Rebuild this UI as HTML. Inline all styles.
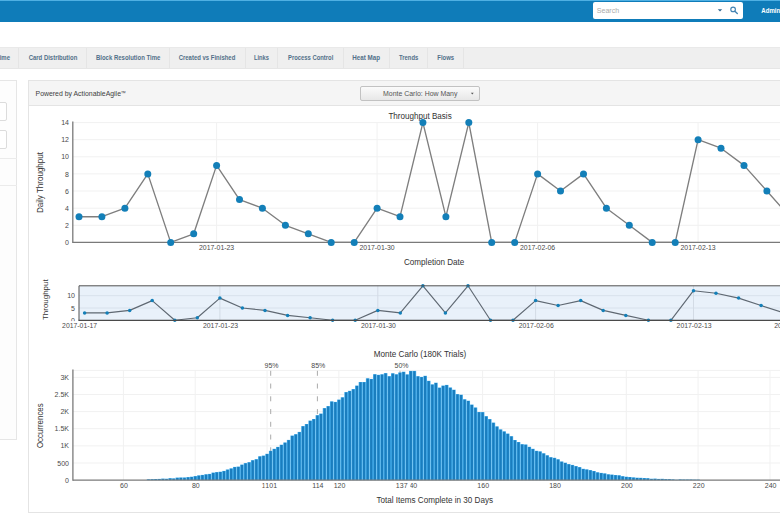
<!DOCTYPE html>
<html><head><meta charset="utf-8"><title>Monte Carlo: How Many</title>
<style>
html,body{margin:0;padding:0;}
body{width:780px;height:516px;overflow:hidden;background:#fff;font-family:"Liberation Sans",Arial,sans-serif;position:relative;}
.abs{position:absolute;}
#topbar{left:0;top:0;width:780px;height:22px;background:#0f7cb9;border-top:1px solid #4fb0e3;box-sizing:border-box;}
#search{left:593.3px;top:2px;width:149.8px;height:16.5px;background:#fff;border-radius:2px;}
#tabs{left:0;top:47px;width:780px;height:21.5px;background:#efefef;border-top:1px solid #e9e9e9;border-bottom:1px solid #e6e6e6;box-sizing:border-box;}
.tab{position:absolute;top:0;height:19.5px;border-right:1px solid #e5e5e5;box-sizing:border-box;}
#lpanel{left:-5px;top:79.8px;width:22.2px;height:359.9px;border:1px solid #e6e6e6;background:#fdfdfd;box-sizing:border-box;}
.inp{position:absolute;left:-5px;width:12px;height:19.2px;border:1px solid #dcdcdc;border-radius:2px;background:#fff;box-sizing:border-box;}
#panel{left:28.2px;top:79.8px;width:760px;height:432.9px;border:1px solid #e4e4e4;background:#fff;box-sizing:border-box;}
#phead{left:0;top:0;width:760px;height:25px;background:#f5f5f5;border-bottom:1px solid #e4e4e4;box-sizing:border-box;}
#dd{left:331px;top:5.3px;width:120px;height:14.6px;border:1px solid #c2c2c2;border-radius:2px;box-sizing:border-box;background:linear-gradient(#fbfbfb,#e7e7e7);}
svg text{font-family:"Liberation Sans",Arial,sans-serif;}
</style></head><body>
<div class="abs" id="topbar"></div>
<div class="abs" id="search"></div>
<div class="abs" id="tabs">
<div class="tab" style="left:-40px;width:59.4px"></div>
<div class="tab" style="left:19.4px;width:67.2px"></div>
<div class="tab" style="left:86.6px;width:83.2px"></div>
<div class="tab" style="left:169.8px;width:76.5px"></div>
<div class="tab" style="left:246.3px;width:31.7px"></div>
<div class="tab" style="left:278px;width:65.8px"></div>
<div class="tab" style="left:343.8px;width:46.0px"></div>
<div class="tab" style="left:389.8px;width:38.2px"></div>
<div class="tab" style="left:428px;width:35.8px"></div>
</div>
<div class="abs" id="lpanel"></div>
<div class="inp" style="top:102px"></div>
<div class="inp" style="top:130.2px"></div>
<div class="abs" style="left:0;top:158.4px;width:16.5px;height:1px;background:#ebebeb"></div>
<div class="abs" style="left:0;top:185px;width:16.5px;height:1px;background:#ebebeb"></div>
<div class="abs" id="panel">
<div class="abs" id="phead"></div>
<div class="abs" id="dd"></div>
</div>

<svg class="abs" style="left:0;top:0" width="780" height="516" viewBox="0 0 780 516">
<text x="596.8" y="13.3" font-size="7" textLength="22.4" lengthAdjust="spacingAndGlyphs" fill="#ababab">Search</text>
<path d="M717.8 9.3 L722.2 9.3 L720 11.5 Z" fill="#2d6590"/>
<circle cx="733.1" cy="9.4" r="2.3" fill="none" stroke="#4384b3" stroke-width="1.15"/><path d="M734.9 11.2 L737.3 13.5" stroke="#4384b3" stroke-width="1.4" stroke-linecap="round"/>
<text x="761.3" y="13.0" font-size="6.8" textLength="39.9" lengthAdjust="spacingAndGlyphs" fill="#fff" font-weight="bold">Administrator</text>
<text x="-21.5" y="60.4" font-size="6.3" textLength="31.5" lengthAdjust="spacingAndGlyphs" fill="#526f89" font-weight="bold">Cycle Time</text>
<text x="28.7" y="60.4" font-size="6.3" textLength="48.6" lengthAdjust="spacingAndGlyphs" fill="#526f89" font-weight="bold">Card Distribution</text>
<text x="96.0" y="60.4" font-size="6.3" textLength="64.3" lengthAdjust="spacingAndGlyphs" fill="#526f89" font-weight="bold">Block Resolution Time</text>
<text x="178.7" y="60.4" font-size="6.3" textLength="56.6" lengthAdjust="spacingAndGlyphs" fill="#526f89" font-weight="bold">Created vs Finished</text>
<text x="254.0" y="60.4" font-size="6.3" textLength="15.0" lengthAdjust="spacingAndGlyphs" fill="#526f89" font-weight="bold">Links</text>
<text x="288.0" y="60.4" font-size="6.3" textLength="45.3" lengthAdjust="spacingAndGlyphs" fill="#526f89" font-weight="bold">Process Control</text>
<text x="352.3" y="60.4" font-size="6.3" textLength="27.7" lengthAdjust="spacingAndGlyphs" fill="#526f89" font-weight="bold">Heat Map</text>
<text x="399.0" y="60.4" font-size="6.3" textLength="19.3" lengthAdjust="spacingAndGlyphs" fill="#526f89" font-weight="bold">Trends</text>
<text x="437.3" y="60.4" font-size="6.3" textLength="16.7" lengthAdjust="spacingAndGlyphs" fill="#526f89" font-weight="bold">Flows</text>
<text x="35.6" y="96.0" font-size="7.7" textLength="90.4" lengthAdjust="spacingAndGlyphs" fill="#404040">Powered by ActionableAgile<tspan font-size="5.6" dy="-1.4">&#8482;</tspan></text>
<text x="383.0" y="95.8" font-size="7.6" textLength="74.4" lengthAdjust="spacingAndGlyphs" fill="#555">Monte Carlo: How Many</text>
<path d="M470.9 92.8 L473.7 92.8 L472.3 94.6 Z" fill="#555"/>
<line x1="72.8" x2="780" y1="225.3" y2="225.3" stroke="#f1f1f1" stroke-width="1"/>
<line x1="72.8" x2="780" y1="208.2" y2="208.2" stroke="#f1f1f1" stroke-width="1"/>
<line x1="72.8" x2="780" y1="191.0" y2="191.0" stroke="#f1f1f1" stroke-width="1"/>
<line x1="72.8" x2="780" y1="173.9" y2="173.9" stroke="#f1f1f1" stroke-width="1"/>
<line x1="72.8" x2="780" y1="156.8" y2="156.8" stroke="#f1f1f1" stroke-width="1"/>
<line x1="72.8" x2="780" y1="139.7" y2="139.7" stroke="#f1f1f1" stroke-width="1"/>
<line x1="72.8" x2="780" y1="122.6" y2="122.6" stroke="#f1f1f1" stroke-width="1"/>
<line x1="216.6" x2="216.6" y1="122.6" y2="242.4" stroke="#f1f1f1" stroke-width="1"/>
<line x1="377.1" x2="377.1" y1="122.6" y2="242.4" stroke="#f1f1f1" stroke-width="1"/>
<line x1="537.6" x2="537.6" y1="122.6" y2="242.4" stroke="#f1f1f1" stroke-width="1"/>
<line x1="698.1" x2="698.1" y1="122.6" y2="242.4" stroke="#f1f1f1" stroke-width="1"/>
<line x1="72.8" x2="72.8" y1="121.6" y2="243.0" stroke="#7a7a7a" stroke-width="1.3"/>
<line x1="72.8" x2="780" y1="242.4" y2="242.4" stroke="#7a7a7a" stroke-width="1.3"/>
<text x="69" y="245.0" font-size="7" text-anchor="end" fill="#4a4a4a">0</text>
<text x="69" y="227.9" font-size="7" text-anchor="end" fill="#4a4a4a">2</text>
<text x="69" y="210.8" font-size="7" text-anchor="end" fill="#4a4a4a">4</text>
<text x="69" y="193.6" font-size="7" text-anchor="end" fill="#4a4a4a">6</text>
<text x="69" y="176.5" font-size="7" text-anchor="end" fill="#4a4a4a">8</text>
<text x="69" y="159.4" font-size="7" text-anchor="end" fill="#4a4a4a">10</text>
<text x="69" y="142.3" font-size="7" text-anchor="end" fill="#4a4a4a">12</text>
<text x="69" y="125.2" font-size="7" text-anchor="end" fill="#4a4a4a">14</text>
<polyline points="79.0,216.7 101.9,216.7 124.9,208.2 147.8,173.9 170.7,242.4 193.7,233.8 216.6,165.4 239.5,199.6 262.4,208.2 285.4,225.3 308.3,233.8 331.2,242.4 354.2,242.4 377.1,208.2 400.0,216.7 422.9,122.6 445.9,216.7 468.8,122.6 491.7,242.4 514.7,242.4 537.6,173.9 560.5,191.0 583.5,173.9 606.4,208.2 629.3,225.3 652.2,242.4 675.2,242.4 698.1,139.7 721.0,148.2 744.0,165.4 766.9,191.0 789.8,216.7" fill="none" stroke="#7e7e7e" stroke-width="1.35" stroke-linejoin="round"/>
<circle cx="79.0" cy="216.7" r="3.5" fill="#137fb8"/>
<circle cx="101.9" cy="216.7" r="3.5" fill="#137fb8"/>
<circle cx="124.9" cy="208.2" r="3.5" fill="#137fb8"/>
<circle cx="147.8" cy="173.9" r="3.5" fill="#137fb8"/>
<circle cx="170.7" cy="242.4" r="3.5" fill="#137fb8"/>
<circle cx="193.7" cy="233.8" r="3.5" fill="#137fb8"/>
<circle cx="216.6" cy="165.4" r="3.5" fill="#137fb8"/>
<circle cx="239.5" cy="199.6" r="3.5" fill="#137fb8"/>
<circle cx="262.4" cy="208.2" r="3.5" fill="#137fb8"/>
<circle cx="285.4" cy="225.3" r="3.5" fill="#137fb8"/>
<circle cx="308.3" cy="233.8" r="3.5" fill="#137fb8"/>
<circle cx="331.2" cy="242.4" r="3.5" fill="#137fb8"/>
<circle cx="354.2" cy="242.4" r="3.5" fill="#137fb8"/>
<circle cx="377.1" cy="208.2" r="3.5" fill="#137fb8"/>
<circle cx="400.0" cy="216.7" r="3.5" fill="#137fb8"/>
<circle cx="422.9" cy="122.6" r="3.5" fill="#137fb8"/>
<circle cx="445.9" cy="216.7" r="3.5" fill="#137fb8"/>
<circle cx="468.8" cy="122.6" r="3.5" fill="#137fb8"/>
<circle cx="491.7" cy="242.4" r="3.5" fill="#137fb8"/>
<circle cx="514.7" cy="242.4" r="3.5" fill="#137fb8"/>
<circle cx="537.6" cy="173.9" r="3.5" fill="#137fb8"/>
<circle cx="560.5" cy="191.0" r="3.5" fill="#137fb8"/>
<circle cx="583.5" cy="173.9" r="3.5" fill="#137fb8"/>
<circle cx="606.4" cy="208.2" r="3.5" fill="#137fb8"/>
<circle cx="629.3" cy="225.3" r="3.5" fill="#137fb8"/>
<circle cx="652.2" cy="242.4" r="3.5" fill="#137fb8"/>
<circle cx="675.2" cy="242.4" r="3.5" fill="#137fb8"/>
<circle cx="698.1" cy="139.7" r="3.5" fill="#137fb8"/>
<circle cx="721.0" cy="148.2" r="3.5" fill="#137fb8"/>
<circle cx="744.0" cy="165.4" r="3.5" fill="#137fb8"/>
<circle cx="766.9" cy="191.0" r="3.5" fill="#137fb8"/>
<circle cx="789.8" cy="216.7" r="3.5" fill="#137fb8"/>
<text x="199.0" y="250.4" font-size="7" textLength="35.2" lengthAdjust="spacingAndGlyphs" fill="#4a4a4a">2017-01-23</text>
<text x="359.5" y="250.4" font-size="7" textLength="35.2" lengthAdjust="spacingAndGlyphs" fill="#4a4a4a">2017-01-30</text>
<text x="520.0" y="250.4" font-size="7" textLength="35.2" lengthAdjust="spacingAndGlyphs" fill="#4a4a4a">2017-02-06</text>
<text x="680.5" y="250.4" font-size="7" textLength="35.2" lengthAdjust="spacingAndGlyphs" fill="#4a4a4a">2017-02-13</text>
<text x="388.4" y="119.3" font-size="8.4" textLength="63.3" lengthAdjust="spacingAndGlyphs" fill="#333">Throughput Basis</text>
<text x="404.0" y="264.7" font-size="8.4" textLength="60.3" lengthAdjust="spacingAndGlyphs" fill="#333">Completion Date</text>
<g transform="translate(40,182.5) rotate(-90)"><text x="-30.5" y="3.0" font-size="8.4" textLength="61.0" lengthAdjust="spacingAndGlyphs" fill="#333">Daily Throughput</text></g>
<rect x="79" y="285.8" width="706" height="34.5" fill="#e9f1fa"/>
<line x1="79" x2="780" y1="308.0" y2="308.0" stroke="#d8e1ec" stroke-width="1"/>
<line x1="79" x2="780" y1="295.7" y2="295.7" stroke="#d8e1ec" stroke-width="1"/>
<line x1="219.9" x2="219.9" y1="285.8" y2="320.3" stroke="#d3dbe5" stroke-width="1"/>
<line x1="377.8" x2="377.8" y1="285.8" y2="320.3" stroke="#d3dbe5" stroke-width="1"/>
<line x1="535.6" x2="535.6" y1="285.8" y2="320.3" stroke="#d3dbe5" stroke-width="1"/>
<line x1="693.5" x2="693.5" y1="285.8" y2="320.3" stroke="#d3dbe5" stroke-width="1"/>
<polyline points="84.6,312.9 107.1,312.9 129.7,310.4 152.2,300.6 174.8,320.3 197.3,317.8 219.9,298.1 242.4,308.0 265.0,310.4 287.6,315.4 310.1,317.8 332.6,320.3 355.2,320.3 377.8,310.4 400.3,312.9 422.9,285.8 445.4,312.9 468.0,285.8 490.5,320.3 513.0,320.3 535.6,300.6 558.1,305.5 580.7,300.6 603.2,310.4 625.8,315.4 648.4,320.3 670.9,320.3 693.5,290.7 716.0,293.2 738.6,298.1 761.1,305.5 783.7,312.9 806.2,315.4" fill="none" stroke="#5f6872" stroke-width="1.15" stroke-linejoin="round"/>
<circle cx="84.6" cy="312.9" r="1.75" fill="#137fb8"/>
<circle cx="107.1" cy="312.9" r="1.75" fill="#137fb8"/>
<circle cx="129.7" cy="310.4" r="1.75" fill="#137fb8"/>
<circle cx="152.2" cy="300.6" r="1.75" fill="#137fb8"/>
<circle cx="174.8" cy="320.3" r="1.75" fill="#137fb8"/>
<circle cx="197.3" cy="317.8" r="1.75" fill="#137fb8"/>
<circle cx="219.9" cy="298.1" r="1.75" fill="#137fb8"/>
<circle cx="242.4" cy="308.0" r="1.75" fill="#137fb8"/>
<circle cx="265.0" cy="310.4" r="1.75" fill="#137fb8"/>
<circle cx="287.6" cy="315.4" r="1.75" fill="#137fb8"/>
<circle cx="310.1" cy="317.8" r="1.75" fill="#137fb8"/>
<circle cx="332.6" cy="320.3" r="1.75" fill="#137fb8"/>
<circle cx="355.2" cy="320.3" r="1.75" fill="#137fb8"/>
<circle cx="377.8" cy="310.4" r="1.75" fill="#137fb8"/>
<circle cx="400.3" cy="312.9" r="1.75" fill="#137fb8"/>
<circle cx="422.9" cy="285.8" r="1.75" fill="#137fb8"/>
<circle cx="445.4" cy="312.9" r="1.75" fill="#137fb8"/>
<circle cx="468.0" cy="285.8" r="1.75" fill="#137fb8"/>
<circle cx="490.5" cy="320.3" r="1.75" fill="#137fb8"/>
<circle cx="513.0" cy="320.3" r="1.75" fill="#137fb8"/>
<circle cx="535.6" cy="300.6" r="1.75" fill="#137fb8"/>
<circle cx="558.1" cy="305.5" r="1.75" fill="#137fb8"/>
<circle cx="580.7" cy="300.6" r="1.75" fill="#137fb8"/>
<circle cx="603.2" cy="310.4" r="1.75" fill="#137fb8"/>
<circle cx="625.8" cy="315.4" r="1.75" fill="#137fb8"/>
<circle cx="648.4" cy="320.3" r="1.75" fill="#137fb8"/>
<circle cx="670.9" cy="320.3" r="1.75" fill="#137fb8"/>
<circle cx="693.5" cy="290.7" r="1.75" fill="#137fb8"/>
<circle cx="716.0" cy="293.2" r="1.75" fill="#137fb8"/>
<circle cx="738.6" cy="298.1" r="1.75" fill="#137fb8"/>
<circle cx="761.1" cy="305.5" r="1.75" fill="#137fb8"/>
<circle cx="783.7" cy="312.9" r="1.75" fill="#137fb8"/>
<path d="M79 320.3 L79 285.8 L785 285.8" fill="none" stroke="#505050" stroke-width="1"/>
<line x1="78.4" x2="780" y1="320.3" y2="320.3" stroke="#4a4a4a" stroke-width="1.3"/>
<text x="75" y="322.9" font-size="7" text-anchor="end" fill="#4a4a4a">0</text>
<text x="75" y="310.6" font-size="7" text-anchor="end" fill="#4a4a4a">5</text>
<text x="75" y="298.3" font-size="7" text-anchor="end" fill="#4a4a4a">10</text>
<rect x="60" y="321.1" width="18" height="3" fill="#fff"/>
<text x="62.1" y="328.3" font-size="7" textLength="35.0" lengthAdjust="spacingAndGlyphs" fill="#4a4a4a">2017-01-17</text>
<text x="203.0" y="328.3" font-size="7" textLength="35.0" lengthAdjust="spacingAndGlyphs" fill="#4a4a4a">2017-01-23</text>
<text x="360.9" y="328.3" font-size="7" textLength="35.0" lengthAdjust="spacingAndGlyphs" fill="#4a4a4a">2017-01-30</text>
<text x="518.7" y="328.3" font-size="7" textLength="35.0" lengthAdjust="spacingAndGlyphs" fill="#4a4a4a">2017-02-06</text>
<text x="676.6" y="328.3" font-size="7" textLength="35.0" lengthAdjust="spacingAndGlyphs" fill="#4a4a4a">2017-02-13</text>
<text x="774.2" y="328.3" font-size="7" textLength="35.0" lengthAdjust="spacingAndGlyphs" fill="#4a4a4a">2017-02-17</text>
<g transform="translate(45.6,299.7) rotate(-90)"><text x="-20.3" y="2.8" font-size="7.8" textLength="40.6" lengthAdjust="spacingAndGlyphs" fill="#333">Throughput</text></g>
<line x1="72.9" x2="780" y1="370.4" y2="370.4" stroke="#f1f1f1" stroke-width="1"/>
<line x1="72.9" x2="780" y1="463.0" y2="463.0" stroke="#f1f1f1" stroke-width="1"/>
<line x1="72.9" x2="780" y1="445.9" y2="445.9" stroke="#f1f1f1" stroke-width="1"/>
<line x1="72.9" x2="780" y1="428.7" y2="428.7" stroke="#f1f1f1" stroke-width="1"/>
<line x1="72.9" x2="780" y1="411.6" y2="411.6" stroke="#f1f1f1" stroke-width="1"/>
<line x1="72.9" x2="780" y1="394.5" y2="394.5" stroke="#f1f1f1" stroke-width="1"/>
<line x1="72.9" x2="780" y1="377.4" y2="377.4" stroke="#f1f1f1" stroke-width="1"/>
<line x1="123.4" x2="123.4" y1="370.4" y2="480.1" stroke="#f1f1f1" stroke-width="1"/>
<line x1="195.2" x2="195.2" y1="370.4" y2="480.1" stroke="#f1f1f1" stroke-width="1"/>
<line x1="267.1" x2="267.1" y1="370.4" y2="480.1" stroke="#f1f1f1" stroke-width="1"/>
<line x1="338.9" x2="338.9" y1="370.4" y2="480.1" stroke="#f1f1f1" stroke-width="1"/>
<line x1="410.8" x2="410.8" y1="370.4" y2="480.1" stroke="#f1f1f1" stroke-width="1"/>
<line x1="482.6" x2="482.6" y1="370.4" y2="480.1" stroke="#f1f1f1" stroke-width="1"/>
<line x1="554.4" x2="554.4" y1="370.4" y2="480.1" stroke="#f1f1f1" stroke-width="1"/>
<line x1="626.3" x2="626.3" y1="370.4" y2="480.1" stroke="#f1f1f1" stroke-width="1"/>
<line x1="698.1" x2="698.1" y1="370.4" y2="480.1" stroke="#f1f1f1" stroke-width="1"/>
<line x1="770.0" x2="770.0" y1="370.4" y2="480.1" stroke="#f1f1f1" stroke-width="1"/>
<line x1="270.7" x2="270.7" y1="370.8" y2="480.1" stroke="#ababab" stroke-width="1" stroke-dasharray="5 7.75"/>
<line x1="317.4" x2="317.4" y1="370.8" y2="480.1" stroke="#ababab" stroke-width="1" stroke-dasharray="5 7.75"/>
<line x1="400.0" x2="400.0" y1="370.8" y2="480.1" stroke="#ababab" stroke-width="1" stroke-dasharray="5 7.75"/>
<rect x="146.75" y="479.3" width="3.6" height="0.8" fill="#46b0ee"/>
<rect x="150.35" y="479.2" width="3.6" height="0.9" fill="#46b0ee"/>
<rect x="153.94" y="479.0" width="3.6" height="1.1" fill="#46b0ee"/>
<rect x="157.53" y="478.9" width="3.6" height="1.2" fill="#46b0ee"/>
<rect x="161.12" y="478.6" width="3.6" height="1.5" fill="#46b0ee"/>
<rect x="164.71" y="478.7" width="3.6" height="1.4" fill="#46b0ee"/>
<rect x="168.31" y="478.2" width="3.6" height="1.9" fill="#46b0ee"/>
<rect x="171.90" y="478.4" width="3.6" height="1.7" fill="#46b0ee"/>
<rect x="175.49" y="477.6" width="3.6" height="2.5" fill="#46b0ee"/>
<rect x="179.08" y="477.5" width="3.6" height="2.6" fill="#46b0ee"/>
<rect x="182.67" y="477.5" width="3.6" height="2.6" fill="#46b0ee"/>
<rect x="186.27" y="477.1" width="3.6" height="3.0" fill="#46b0ee"/>
<rect x="189.86" y="476.7" width="3.6" height="3.4" fill="#46b0ee"/>
<rect x="193.45" y="476.1" width="3.6" height="4.0" fill="#46b0ee"/>
<rect x="197.04" y="475.4" width="3.6" height="4.7" fill="#46b0ee"/>
<rect x="200.63" y="474.9" width="3.6" height="5.2" fill="#46b0ee"/>
<rect x="204.23" y="474.3" width="3.6" height="5.8" fill="#46b0ee"/>
<rect x="207.82" y="473.9" width="3.6" height="6.2" fill="#46b0ee"/>
<rect x="211.41" y="472.6" width="3.6" height="7.5" fill="#46b0ee"/>
<rect x="215.00" y="472.1" width="3.6" height="8.0" fill="#46b0ee"/>
<rect x="218.59" y="471.7" width="3.6" height="8.4" fill="#46b0ee"/>
<rect x="222.19" y="470.9" width="3.6" height="9.2" fill="#46b0ee"/>
<rect x="225.78" y="469.5" width="3.6" height="10.6" fill="#46b0ee"/>
<rect x="229.37" y="468.4" width="3.6" height="11.7" fill="#46b0ee"/>
<rect x="232.96" y="466.9" width="3.6" height="13.2" fill="#46b0ee"/>
<rect x="236.55" y="466.6" width="3.6" height="13.5" fill="#46b0ee"/>
<rect x="240.15" y="464.6" width="3.6" height="15.5" fill="#46b0ee"/>
<rect x="243.74" y="463.1" width="3.6" height="17.0" fill="#46b0ee"/>
<rect x="247.33" y="462.2" width="3.6" height="17.9" fill="#46b0ee"/>
<rect x="250.92" y="460.2" width="3.6" height="19.9" fill="#46b0ee"/>
<rect x="254.51" y="459.2" width="3.6" height="20.9" fill="#46b0ee"/>
<rect x="258.11" y="456.3" width="3.6" height="23.8" fill="#46b0ee"/>
<rect x="261.70" y="455.6" width="3.6" height="24.5" fill="#46b0ee"/>
<rect x="265.29" y="453.8" width="3.6" height="26.3" fill="#46b0ee"/>
<rect x="268.88" y="450.8" width="3.6" height="29.3" fill="#46b0ee"/>
<rect x="272.47" y="448.8" width="3.6" height="31.3" fill="#46b0ee"/>
<rect x="276.07" y="446.9" width="3.6" height="33.2" fill="#46b0ee"/>
<rect x="279.66" y="444.7" width="3.6" height="35.4" fill="#46b0ee"/>
<rect x="283.25" y="442.5" width="3.6" height="37.6" fill="#46b0ee"/>
<rect x="286.84" y="439.9" width="3.6" height="40.2" fill="#46b0ee"/>
<rect x="290.43" y="435.6" width="3.6" height="44.5" fill="#46b0ee"/>
<rect x="294.03" y="434.2" width="3.6" height="45.9" fill="#46b0ee"/>
<rect x="297.62" y="431.9" width="3.6" height="48.2" fill="#46b0ee"/>
<rect x="301.21" y="426.1" width="3.6" height="54.0" fill="#46b0ee"/>
<rect x="304.80" y="424.0" width="3.6" height="56.1" fill="#46b0ee"/>
<rect x="308.39" y="420.6" width="3.6" height="59.5" fill="#46b0ee"/>
<rect x="311.99" y="419.0" width="3.6" height="61.1" fill="#46b0ee"/>
<rect x="315.58" y="415.2" width="3.6" height="64.9" fill="#46b0ee"/>
<rect x="319.17" y="413.6" width="3.6" height="66.5" fill="#46b0ee"/>
<rect x="322.76" y="408.1" width="3.6" height="72.0" fill="#46b0ee"/>
<rect x="326.35" y="406.1" width="3.6" height="74.0" fill="#46b0ee"/>
<rect x="329.95" y="401.4" width="3.6" height="78.7" fill="#46b0ee"/>
<rect x="333.54" y="401.9" width="3.6" height="78.2" fill="#46b0ee"/>
<rect x="337.13" y="399.6" width="3.6" height="80.5" fill="#46b0ee"/>
<rect x="340.72" y="397.3" width="3.6" height="82.8" fill="#46b0ee"/>
<rect x="344.31" y="392.1" width="3.6" height="88.0" fill="#46b0ee"/>
<rect x="347.91" y="390.8" width="3.6" height="89.3" fill="#46b0ee"/>
<rect x="351.50" y="389.1" width="3.6" height="91.0" fill="#46b0ee"/>
<rect x="355.09" y="385.6" width="3.6" height="94.5" fill="#46b0ee"/>
<rect x="358.68" y="382.0" width="3.6" height="98.1" fill="#46b0ee"/>
<rect x="362.27" y="382.0" width="3.6" height="98.1" fill="#46b0ee"/>
<rect x="365.87" y="378.3" width="3.6" height="101.8" fill="#46b0ee"/>
<rect x="369.46" y="378.9" width="3.6" height="101.2" fill="#46b0ee"/>
<rect x="373.05" y="374.2" width="3.6" height="105.9" fill="#46b0ee"/>
<rect x="376.64" y="374.8" width="3.6" height="105.3" fill="#46b0ee"/>
<rect x="380.23" y="374.3" width="3.6" height="105.8" fill="#46b0ee"/>
<rect x="383.83" y="373.1" width="3.6" height="107.0" fill="#46b0ee"/>
<rect x="387.42" y="376.2" width="3.6" height="103.9" fill="#46b0ee"/>
<rect x="391.01" y="373.3" width="3.6" height="106.8" fill="#46b0ee"/>
<rect x="394.60" y="374.3" width="3.6" height="105.8" fill="#46b0ee"/>
<rect x="398.19" y="372.5" width="3.6" height="107.6" fill="#46b0ee"/>
<rect x="401.79" y="371.7" width="3.6" height="108.4" fill="#46b0ee"/>
<rect x="405.38" y="374.4" width="3.6" height="105.7" fill="#46b0ee"/>
<rect x="408.97" y="370.9" width="3.6" height="109.2" fill="#46b0ee"/>
<rect x="412.56" y="370.9" width="3.6" height="109.2" fill="#46b0ee"/>
<rect x="416.15" y="376.2" width="3.6" height="103.9" fill="#46b0ee"/>
<rect x="419.75" y="376.9" width="3.6" height="103.2" fill="#46b0ee"/>
<rect x="423.34" y="375.8" width="3.6" height="104.3" fill="#46b0ee"/>
<rect x="426.93" y="380.8" width="3.6" height="99.3" fill="#46b0ee"/>
<rect x="430.52" y="384.4" width="3.6" height="95.7" fill="#46b0ee"/>
<rect x="434.11" y="382.7" width="3.6" height="97.4" fill="#46b0ee"/>
<rect x="437.71" y="387.6" width="3.6" height="92.5" fill="#46b0ee"/>
<rect x="441.30" y="385.6" width="3.6" height="94.5" fill="#46b0ee"/>
<rect x="444.89" y="384.9" width="3.6" height="95.2" fill="#46b0ee"/>
<rect x="448.48" y="387.5" width="3.6" height="92.6" fill="#46b0ee"/>
<rect x="452.07" y="389.7" width="3.6" height="90.4" fill="#46b0ee"/>
<rect x="455.67" y="394.1" width="3.6" height="86.0" fill="#46b0ee"/>
<rect x="459.26" y="394.7" width="3.6" height="85.4" fill="#46b0ee"/>
<rect x="462.85" y="399.3" width="3.6" height="80.8" fill="#46b0ee"/>
<rect x="466.44" y="400.7" width="3.6" height="79.4" fill="#46b0ee"/>
<rect x="470.03" y="404.6" width="3.6" height="75.5" fill="#46b0ee"/>
<rect x="473.63" y="407.5" width="3.6" height="72.6" fill="#46b0ee"/>
<rect x="477.22" y="412.0" width="3.6" height="68.1" fill="#46b0ee"/>
<rect x="480.81" y="412.1" width="3.6" height="68.0" fill="#46b0ee"/>
<rect x="484.40" y="416.2" width="3.6" height="63.9" fill="#46b0ee"/>
<rect x="487.99" y="419.1" width="3.6" height="61.0" fill="#46b0ee"/>
<rect x="491.59" y="422.6" width="3.6" height="57.5" fill="#46b0ee"/>
<rect x="495.18" y="426.4" width="3.6" height="53.7" fill="#46b0ee"/>
<rect x="498.77" y="429.4" width="3.6" height="50.7" fill="#46b0ee"/>
<rect x="502.36" y="431.4" width="3.6" height="48.7" fill="#46b0ee"/>
<rect x="505.95" y="433.6" width="3.6" height="46.5" fill="#46b0ee"/>
<rect x="509.55" y="436.2" width="3.6" height="43.9" fill="#46b0ee"/>
<rect x="513.14" y="440.0" width="3.6" height="40.1" fill="#46b0ee"/>
<rect x="516.73" y="442.0" width="3.6" height="38.1" fill="#46b0ee"/>
<rect x="520.32" y="444.2" width="3.6" height="35.9" fill="#46b0ee"/>
<rect x="523.91" y="444.5" width="3.6" height="35.6" fill="#46b0ee"/>
<rect x="527.51" y="446.8" width="3.6" height="33.3" fill="#46b0ee"/>
<rect x="531.10" y="448.8" width="3.6" height="31.3" fill="#46b0ee"/>
<rect x="534.69" y="450.8" width="3.6" height="29.3" fill="#46b0ee"/>
<rect x="538.28" y="451.4" width="3.6" height="28.7" fill="#46b0ee"/>
<rect x="541.87" y="453.3" width="3.6" height="26.8" fill="#46b0ee"/>
<rect x="545.47" y="455.3" width="3.6" height="24.8" fill="#46b0ee"/>
<rect x="549.06" y="457.2" width="3.6" height="22.9" fill="#46b0ee"/>
<rect x="552.65" y="457.8" width="3.6" height="22.3" fill="#46b0ee"/>
<rect x="556.24" y="459.3" width="3.6" height="20.8" fill="#46b0ee"/>
<rect x="559.83" y="461.5" width="3.6" height="18.6" fill="#46b0ee"/>
<rect x="563.43" y="462.7" width="3.6" height="17.4" fill="#46b0ee"/>
<rect x="567.02" y="464.1" width="3.6" height="16.0" fill="#46b0ee"/>
<rect x="570.61" y="464.9" width="3.6" height="15.2" fill="#46b0ee"/>
<rect x="574.20" y="466.1" width="3.6" height="14.0" fill="#46b0ee"/>
<rect x="577.79" y="467.1" width="3.6" height="13.0" fill="#46b0ee"/>
<rect x="581.39" y="468.8" width="3.6" height="11.3" fill="#46b0ee"/>
<rect x="584.98" y="469.4" width="3.6" height="10.7" fill="#46b0ee"/>
<rect x="588.57" y="470.1" width="3.6" height="10.0" fill="#46b0ee"/>
<rect x="592.16" y="471.0" width="3.6" height="9.1" fill="#46b0ee"/>
<rect x="595.75" y="472.3" width="3.6" height="7.8" fill="#46b0ee"/>
<rect x="599.35" y="472.9" width="3.6" height="7.2" fill="#46b0ee"/>
<rect x="602.94" y="473.4" width="3.6" height="6.7" fill="#46b0ee"/>
<rect x="606.53" y="474.3" width="3.6" height="5.8" fill="#46b0ee"/>
<rect x="610.12" y="474.6" width="3.6" height="5.5" fill="#46b0ee"/>
<rect x="613.71" y="475.0" width="3.6" height="5.1" fill="#46b0ee"/>
<rect x="617.31" y="475.3" width="3.6" height="4.8" fill="#46b0ee"/>
<rect x="620.90" y="476.2" width="3.6" height="3.9" fill="#46b0ee"/>
<rect x="624.49" y="476.7" width="3.6" height="3.4" fill="#46b0ee"/>
<rect x="628.08" y="477.0" width="3.6" height="3.1" fill="#46b0ee"/>
<rect x="631.67" y="477.4" width="3.6" height="2.7" fill="#46b0ee"/>
<rect x="635.27" y="477.7" width="3.6" height="2.4" fill="#46b0ee"/>
<rect x="638.86" y="477.8" width="3.6" height="2.3" fill="#46b0ee"/>
<rect x="642.45" y="478.0" width="3.6" height="2.1" fill="#46b0ee"/>
<rect x="646.04" y="478.2" width="3.6" height="1.9" fill="#46b0ee"/>
<rect x="649.63" y="478.7" width="3.6" height="1.4" fill="#46b0ee"/>
<rect x="653.23" y="478.6" width="3.6" height="1.5" fill="#46b0ee"/>
<rect x="656.82" y="478.9" width="3.6" height="1.2" fill="#46b0ee"/>
<rect x="660.41" y="478.8" width="3.6" height="1.3" fill="#46b0ee"/>
<rect x="664.00" y="479.1" width="3.6" height="1.0" fill="#46b0ee"/>
<rect x="667.59" y="479.1" width="3.6" height="1.0" fill="#46b0ee"/>
<rect x="671.19" y="479.4" width="3.6" height="0.7" fill="#46b0ee"/>
<rect x="674.78" y="479.7" width="3.6" height="0.4" fill="#46b0ee"/>
<rect x="678.37" y="479.4" width="3.6" height="0.7" fill="#46b0ee"/>
<rect x="681.96" y="479.5" width="3.6" height="0.6" fill="#46b0ee"/>
<rect x="685.55" y="479.5" width="3.6" height="0.6" fill="#46b0ee"/>
<rect x="689.15" y="479.5" width="3.6" height="0.6" fill="#46b0ee"/>
<rect x="692.74" y="479.6" width="3.6" height="0.5" fill="#46b0ee"/>
<rect x="696.33" y="479.6" width="3.6" height="0.5" fill="#46b0ee"/>
<rect x="147.41" y="479.6" width="2.28" height="0.5" fill="#1a7dbe"/>
<rect x="151.01" y="479.5" width="2.28" height="0.6" fill="#1a7dbe"/>
<rect x="154.60" y="479.3" width="2.28" height="0.8" fill="#1a7dbe"/>
<rect x="158.19" y="479.2" width="2.28" height="0.9" fill="#1a7dbe"/>
<rect x="161.78" y="478.9" width="2.28" height="1.2" fill="#1a7dbe"/>
<rect x="165.37" y="479.0" width="2.28" height="1.1" fill="#1a7dbe"/>
<rect x="168.97" y="478.5" width="2.28" height="1.6" fill="#1a7dbe"/>
<rect x="172.56" y="478.7" width="2.28" height="1.4" fill="#1a7dbe"/>
<rect x="176.15" y="477.9" width="2.28" height="2.2" fill="#1a7dbe"/>
<rect x="179.74" y="477.8" width="2.28" height="2.3" fill="#1a7dbe"/>
<rect x="183.33" y="477.8" width="2.28" height="2.3" fill="#1a7dbe"/>
<rect x="186.93" y="477.4" width="2.28" height="2.7" fill="#1a7dbe"/>
<rect x="190.52" y="477.0" width="2.28" height="3.1" fill="#1a7dbe"/>
<rect x="194.11" y="476.4" width="2.28" height="3.7" fill="#1a7dbe"/>
<rect x="197.70" y="475.7" width="2.28" height="4.4" fill="#1a7dbe"/>
<rect x="201.29" y="475.2" width="2.28" height="4.9" fill="#1a7dbe"/>
<rect x="204.89" y="474.6" width="2.28" height="5.5" fill="#1a7dbe"/>
<rect x="208.48" y="474.2" width="2.28" height="5.9" fill="#1a7dbe"/>
<rect x="212.07" y="472.9" width="2.28" height="7.2" fill="#1a7dbe"/>
<rect x="215.66" y="472.4" width="2.28" height="7.7" fill="#1a7dbe"/>
<rect x="219.25" y="472.0" width="2.28" height="8.1" fill="#1a7dbe"/>
<rect x="222.85" y="471.2" width="2.28" height="8.9" fill="#1a7dbe"/>
<rect x="226.44" y="469.8" width="2.28" height="10.3" fill="#1a7dbe"/>
<rect x="230.03" y="468.7" width="2.28" height="11.4" fill="#1a7dbe"/>
<rect x="233.62" y="467.2" width="2.28" height="12.9" fill="#1a7dbe"/>
<rect x="237.21" y="466.9" width="2.28" height="13.2" fill="#1a7dbe"/>
<rect x="240.81" y="464.9" width="2.28" height="15.2" fill="#1a7dbe"/>
<rect x="244.40" y="463.4" width="2.28" height="16.7" fill="#1a7dbe"/>
<rect x="247.99" y="462.5" width="2.28" height="17.6" fill="#1a7dbe"/>
<rect x="251.58" y="460.5" width="2.28" height="19.6" fill="#1a7dbe"/>
<rect x="255.17" y="459.5" width="2.28" height="20.6" fill="#1a7dbe"/>
<rect x="258.77" y="456.6" width="2.28" height="23.5" fill="#1a7dbe"/>
<rect x="262.36" y="455.9" width="2.28" height="24.2" fill="#1a7dbe"/>
<rect x="265.95" y="454.1" width="2.28" height="26.0" fill="#1a7dbe"/>
<rect x="269.54" y="451.1" width="2.28" height="29.0" fill="#1a7dbe"/>
<rect x="273.13" y="449.1" width="2.28" height="31.0" fill="#1a7dbe"/>
<rect x="276.73" y="447.2" width="2.28" height="32.9" fill="#1a7dbe"/>
<rect x="280.32" y="445.0" width="2.28" height="35.1" fill="#1a7dbe"/>
<rect x="283.91" y="442.8" width="2.28" height="37.3" fill="#1a7dbe"/>
<rect x="287.50" y="440.2" width="2.28" height="39.9" fill="#1a7dbe"/>
<rect x="291.09" y="435.9" width="2.28" height="44.2" fill="#1a7dbe"/>
<rect x="294.69" y="434.5" width="2.28" height="45.6" fill="#1a7dbe"/>
<rect x="298.28" y="432.2" width="2.28" height="47.9" fill="#1a7dbe"/>
<rect x="301.87" y="426.4" width="2.28" height="53.7" fill="#1a7dbe"/>
<rect x="305.46" y="424.3" width="2.28" height="55.8" fill="#1a7dbe"/>
<rect x="309.05" y="420.9" width="2.28" height="59.2" fill="#1a7dbe"/>
<rect x="312.65" y="419.3" width="2.28" height="60.8" fill="#1a7dbe"/>
<rect x="316.24" y="415.5" width="2.28" height="64.6" fill="#1a7dbe"/>
<rect x="319.83" y="413.9" width="2.28" height="66.2" fill="#1a7dbe"/>
<rect x="323.42" y="408.4" width="2.28" height="71.7" fill="#1a7dbe"/>
<rect x="327.01" y="406.4" width="2.28" height="73.7" fill="#1a7dbe"/>
<rect x="330.61" y="401.7" width="2.28" height="78.4" fill="#1a7dbe"/>
<rect x="334.20" y="402.2" width="2.28" height="77.9" fill="#1a7dbe"/>
<rect x="337.79" y="399.9" width="2.28" height="80.2" fill="#1a7dbe"/>
<rect x="341.38" y="397.6" width="2.28" height="82.5" fill="#1a7dbe"/>
<rect x="344.97" y="392.4" width="2.28" height="87.7" fill="#1a7dbe"/>
<rect x="348.57" y="391.1" width="2.28" height="89.0" fill="#1a7dbe"/>
<rect x="352.16" y="389.4" width="2.28" height="90.7" fill="#1a7dbe"/>
<rect x="355.75" y="385.9" width="2.28" height="94.2" fill="#1a7dbe"/>
<rect x="359.34" y="382.3" width="2.28" height="97.8" fill="#1a7dbe"/>
<rect x="362.93" y="382.3" width="2.28" height="97.8" fill="#1a7dbe"/>
<rect x="366.53" y="378.6" width="2.28" height="101.5" fill="#1a7dbe"/>
<rect x="370.12" y="379.2" width="2.28" height="100.9" fill="#1a7dbe"/>
<rect x="373.71" y="374.5" width="2.28" height="105.6" fill="#1a7dbe"/>
<rect x="377.30" y="375.1" width="2.28" height="105.0" fill="#1a7dbe"/>
<rect x="380.89" y="374.6" width="2.28" height="105.5" fill="#1a7dbe"/>
<rect x="384.49" y="373.4" width="2.28" height="106.7" fill="#1a7dbe"/>
<rect x="388.08" y="376.5" width="2.28" height="103.6" fill="#1a7dbe"/>
<rect x="391.67" y="373.6" width="2.28" height="106.5" fill="#1a7dbe"/>
<rect x="395.26" y="374.6" width="2.28" height="105.5" fill="#1a7dbe"/>
<rect x="398.85" y="372.8" width="2.28" height="107.3" fill="#1a7dbe"/>
<rect x="402.45" y="372.0" width="2.28" height="108.1" fill="#1a7dbe"/>
<rect x="406.04" y="374.7" width="2.28" height="105.4" fill="#1a7dbe"/>
<rect x="409.63" y="371.2" width="2.28" height="108.9" fill="#1a7dbe"/>
<rect x="413.22" y="371.2" width="2.28" height="108.9" fill="#1a7dbe"/>
<rect x="416.81" y="376.5" width="2.28" height="103.6" fill="#1a7dbe"/>
<rect x="420.41" y="377.2" width="2.28" height="102.9" fill="#1a7dbe"/>
<rect x="424.00" y="376.1" width="2.28" height="104.0" fill="#1a7dbe"/>
<rect x="427.59" y="381.1" width="2.28" height="99.0" fill="#1a7dbe"/>
<rect x="431.18" y="384.7" width="2.28" height="95.4" fill="#1a7dbe"/>
<rect x="434.77" y="383.0" width="2.28" height="97.1" fill="#1a7dbe"/>
<rect x="438.37" y="387.9" width="2.28" height="92.2" fill="#1a7dbe"/>
<rect x="441.96" y="385.9" width="2.28" height="94.2" fill="#1a7dbe"/>
<rect x="445.55" y="385.2" width="2.28" height="94.9" fill="#1a7dbe"/>
<rect x="449.14" y="387.8" width="2.28" height="92.3" fill="#1a7dbe"/>
<rect x="452.73" y="390.0" width="2.28" height="90.1" fill="#1a7dbe"/>
<rect x="456.33" y="394.4" width="2.28" height="85.7" fill="#1a7dbe"/>
<rect x="459.92" y="395.0" width="2.28" height="85.1" fill="#1a7dbe"/>
<rect x="463.51" y="399.6" width="2.28" height="80.5" fill="#1a7dbe"/>
<rect x="467.10" y="401.0" width="2.28" height="79.1" fill="#1a7dbe"/>
<rect x="470.69" y="404.9" width="2.28" height="75.2" fill="#1a7dbe"/>
<rect x="474.29" y="407.8" width="2.28" height="72.3" fill="#1a7dbe"/>
<rect x="477.88" y="412.3" width="2.28" height="67.8" fill="#1a7dbe"/>
<rect x="481.47" y="412.4" width="2.28" height="67.7" fill="#1a7dbe"/>
<rect x="485.06" y="416.5" width="2.28" height="63.6" fill="#1a7dbe"/>
<rect x="488.65" y="419.4" width="2.28" height="60.7" fill="#1a7dbe"/>
<rect x="492.25" y="422.9" width="2.28" height="57.2" fill="#1a7dbe"/>
<rect x="495.84" y="426.7" width="2.28" height="53.4" fill="#1a7dbe"/>
<rect x="499.43" y="429.7" width="2.28" height="50.4" fill="#1a7dbe"/>
<rect x="503.02" y="431.7" width="2.28" height="48.4" fill="#1a7dbe"/>
<rect x="506.61" y="433.9" width="2.28" height="46.2" fill="#1a7dbe"/>
<rect x="510.21" y="436.5" width="2.28" height="43.6" fill="#1a7dbe"/>
<rect x="513.80" y="440.3" width="2.28" height="39.8" fill="#1a7dbe"/>
<rect x="517.39" y="442.3" width="2.28" height="37.8" fill="#1a7dbe"/>
<rect x="520.98" y="444.5" width="2.28" height="35.6" fill="#1a7dbe"/>
<rect x="524.57" y="444.8" width="2.28" height="35.3" fill="#1a7dbe"/>
<rect x="528.17" y="447.1" width="2.28" height="33.0" fill="#1a7dbe"/>
<rect x="531.76" y="449.1" width="2.28" height="31.0" fill="#1a7dbe"/>
<rect x="535.35" y="451.1" width="2.28" height="29.0" fill="#1a7dbe"/>
<rect x="538.94" y="451.7" width="2.28" height="28.4" fill="#1a7dbe"/>
<rect x="542.53" y="453.6" width="2.28" height="26.5" fill="#1a7dbe"/>
<rect x="546.13" y="455.6" width="2.28" height="24.5" fill="#1a7dbe"/>
<rect x="549.72" y="457.5" width="2.28" height="22.6" fill="#1a7dbe"/>
<rect x="553.31" y="458.1" width="2.28" height="22.0" fill="#1a7dbe"/>
<rect x="556.90" y="459.6" width="2.28" height="20.5" fill="#1a7dbe"/>
<rect x="560.49" y="461.8" width="2.28" height="18.3" fill="#1a7dbe"/>
<rect x="564.09" y="463.0" width="2.28" height="17.1" fill="#1a7dbe"/>
<rect x="567.68" y="464.4" width="2.28" height="15.7" fill="#1a7dbe"/>
<rect x="571.27" y="465.2" width="2.28" height="14.9" fill="#1a7dbe"/>
<rect x="574.86" y="466.4" width="2.28" height="13.7" fill="#1a7dbe"/>
<rect x="578.45" y="467.4" width="2.28" height="12.7" fill="#1a7dbe"/>
<rect x="582.05" y="469.1" width="2.28" height="11.0" fill="#1a7dbe"/>
<rect x="585.64" y="469.7" width="2.28" height="10.4" fill="#1a7dbe"/>
<rect x="589.23" y="470.4" width="2.28" height="9.7" fill="#1a7dbe"/>
<rect x="592.82" y="471.3" width="2.28" height="8.8" fill="#1a7dbe"/>
<rect x="596.41" y="472.6" width="2.28" height="7.5" fill="#1a7dbe"/>
<rect x="600.01" y="473.2" width="2.28" height="6.9" fill="#1a7dbe"/>
<rect x="603.60" y="473.7" width="2.28" height="6.4" fill="#1a7dbe"/>
<rect x="607.19" y="474.6" width="2.28" height="5.5" fill="#1a7dbe"/>
<rect x="610.78" y="474.9" width="2.28" height="5.2" fill="#1a7dbe"/>
<rect x="614.37" y="475.3" width="2.28" height="4.8" fill="#1a7dbe"/>
<rect x="617.97" y="475.6" width="2.28" height="4.5" fill="#1a7dbe"/>
<rect x="621.56" y="476.5" width="2.28" height="3.6" fill="#1a7dbe"/>
<rect x="625.15" y="477.0" width="2.28" height="3.1" fill="#1a7dbe"/>
<rect x="628.74" y="477.3" width="2.28" height="2.8" fill="#1a7dbe"/>
<rect x="632.33" y="477.7" width="2.28" height="2.4" fill="#1a7dbe"/>
<rect x="635.93" y="478.0" width="2.28" height="2.1" fill="#1a7dbe"/>
<rect x="639.52" y="478.1" width="2.28" height="2.0" fill="#1a7dbe"/>
<rect x="643.11" y="478.3" width="2.28" height="1.8" fill="#1a7dbe"/>
<rect x="646.70" y="478.5" width="2.28" height="1.6" fill="#1a7dbe"/>
<rect x="650.29" y="479.0" width="2.28" height="1.1" fill="#1a7dbe"/>
<rect x="653.89" y="478.9" width="2.28" height="1.2" fill="#1a7dbe"/>
<rect x="657.48" y="479.2" width="2.28" height="0.9" fill="#1a7dbe"/>
<rect x="661.07" y="479.1" width="2.28" height="1.0" fill="#1a7dbe"/>
<rect x="664.66" y="479.4" width="2.28" height="0.7" fill="#1a7dbe"/>
<rect x="668.25" y="479.4" width="2.28" height="0.7" fill="#1a7dbe"/>
<rect x="671.85" y="479.7" width="2.28" height="0.4" fill="#1a7dbe"/>
<rect x="675.44" y="480.0" width="2.28" height="0.1" fill="#1a7dbe"/>
<rect x="679.03" y="479.7" width="2.28" height="0.4" fill="#1a7dbe"/>
<rect x="682.62" y="479.8" width="2.28" height="0.3" fill="#1a7dbe"/>
<rect x="686.21" y="479.8" width="2.28" height="0.3" fill="#1a7dbe"/>
<rect x="689.81" y="479.8" width="2.28" height="0.3" fill="#1a7dbe"/>
<rect x="693.40" y="479.9" width="2.28" height="0.2" fill="#1a7dbe"/>
<rect x="696.99" y="479.9" width="2.28" height="0.2" fill="#1a7dbe"/>
<line x1="72.9" x2="72.9" y1="369.6" y2="480.70000000000005" stroke="#7a7a7a" stroke-width="1.3"/>
<line x1="72.9" x2="780" y1="480.1" y2="480.1" stroke="#7a7a7a" stroke-width="1.3"/>
<text x="69" y="482.6" font-size="7" text-anchor="end" fill="#4a4a4a">0</text>
<text x="69" y="465.5" font-size="7" text-anchor="end" fill="#4a4a4a">500</text>
<text x="69" y="448.4" font-size="7" text-anchor="end" fill="#4a4a4a">1K</text>
<text x="69" y="431.2" font-size="7" text-anchor="end" fill="#4a4a4a">1.5K</text>
<text x="69" y="414.1" font-size="7" text-anchor="end" fill="#4a4a4a">2K</text>
<text x="69" y="397.0" font-size="7" text-anchor="end" fill="#4a4a4a">2.5K</text>
<text x="69" y="379.9" font-size="7" text-anchor="end" fill="#4a4a4a">3K</text>
<text x="124.0" y="488" font-size="7" text-anchor="middle" fill="#4a4a4a">60</text>
<text x="195.8" y="488" font-size="7" text-anchor="middle" fill="#4a4a4a">80</text>
<text x="267.7" y="488" font-size="7" text-anchor="middle" fill="#4a4a4a">100</text>
<text x="339.5" y="488" font-size="7" text-anchor="middle" fill="#4a4a4a">120</text>
<text x="411.4" y="488" font-size="7" text-anchor="middle" fill="#4a4a4a">140</text>
<text x="483.2" y="488" font-size="7" text-anchor="middle" fill="#4a4a4a">160</text>
<text x="555.0" y="488" font-size="7" text-anchor="middle" fill="#4a4a4a">180</text>
<text x="626.9" y="488" font-size="7" text-anchor="middle" fill="#4a4a4a">200</text>
<text x="698.7" y="488" font-size="7" text-anchor="middle" fill="#4a4a4a">220</text>
<text x="770.6" y="488" font-size="7" text-anchor="middle" fill="#4a4a4a">240</text>
<rect x="264.6" y="481.5" width="13.2" height="9" fill="#fff"/>
<text x="271.2" y="488" font-size="7" text-anchor="middle" fill="#4a4a4a">101</text>
<rect x="311.3" y="481.5" width="13.2" height="9" fill="#fff"/>
<text x="317.9" y="488" font-size="7" text-anchor="middle" fill="#4a4a4a">114</text>
<rect x="395.1" y="481.5" width="15.2" height="9" fill="#fff"/>
<text x="401.7" y="488" font-size="7" text-anchor="middle" fill="#4a4a4a">137</text>
<text x="271.6" y="367.9" font-size="7" text-anchor="middle" fill="#4a4a4a">95%</text>
<text x="318.3" y="367.9" font-size="7" text-anchor="middle" fill="#4a4a4a">85%</text>
<text x="401.5" y="367.9" font-size="7" text-anchor="middle" fill="#4a4a4a">50%</text>
<text x="373.8" y="356.7" font-size="8.4" textLength="92.4" lengthAdjust="spacingAndGlyphs" fill="#333">Monte Carlo (180K Trials)</text>
<text x="376.4" y="502.8" font-size="8.4" textLength="116.6" lengthAdjust="spacingAndGlyphs" fill="#333">Total Items Complete in 30 Days</text>
<g transform="translate(40.1,425.7) rotate(-90)"><text x="-22.4" y="3.0" font-size="8.4" textLength="44.8" lengthAdjust="spacingAndGlyphs" fill="#333">Occurrences</text></g>
</svg>
</body></html>
